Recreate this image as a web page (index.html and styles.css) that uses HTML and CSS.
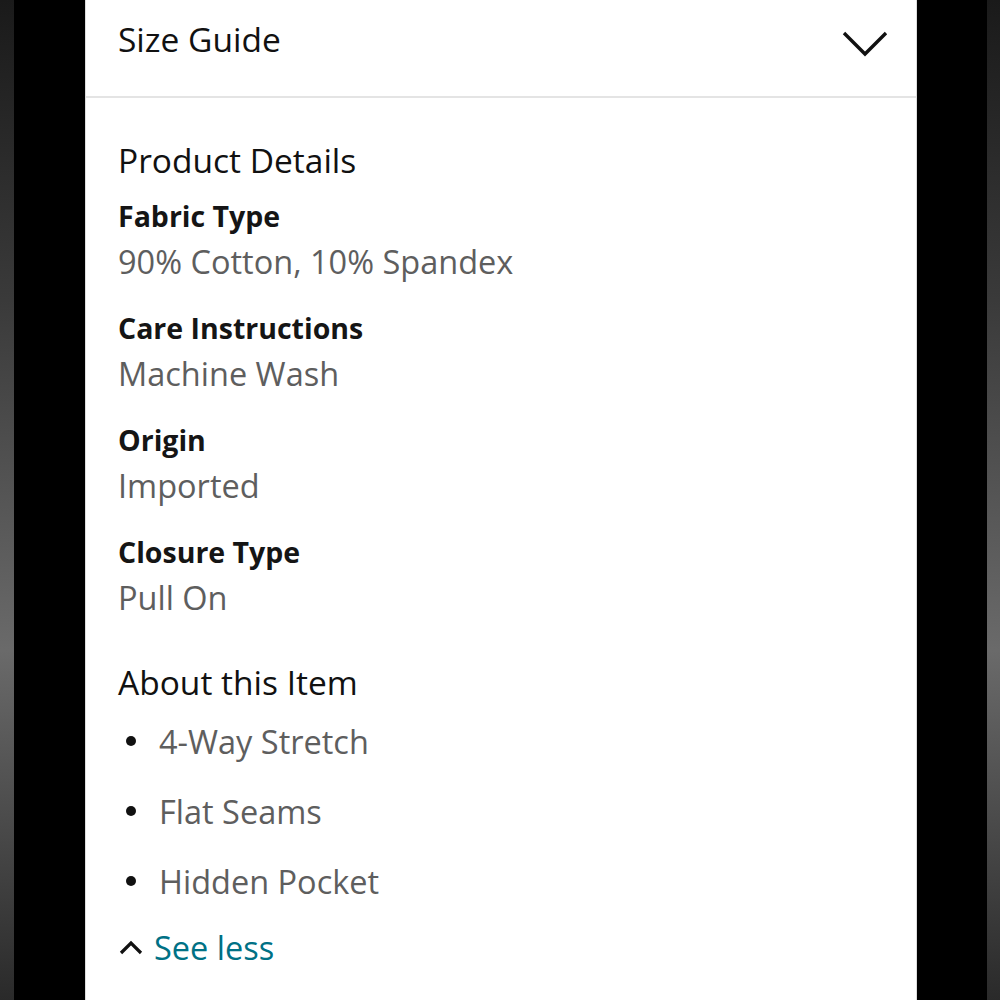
FILE: index.html
```html
<!DOCTYPE html>
<html lang="en">
<head>
  <meta charset="UTF-8" />
  <meta name="viewport" content="width=device-width, initial-scale=1.0"/>
  <title>Product Details</title>
  <link rel="stylesheet" href="styles.css">
</head>
<body>
  <div class="frame">
    <div class="edge edge-left"></div>
    <main class="panel">
      <div class="size-guide">
        <span>Size Guide</span>
        <svg class="chevron" width="48" height="28" viewBox="0 0 48 28"><path d="M3 3 L24 24 L45 3" fill="none" stroke="#111" stroke-width="3.4"/></svg>
      </div>
      <section class="details">
        <h2>Product Details</h2>
        <dl>
          <div class="row"><dt>Fabric Type</dt><dd>90% Cotton, 10% Spandex</dd></div>
          <div class="row"><dt>Care Instructions</dt><dd>Machine Wash</dd></div>
          <div class="row"><dt>Origin</dt><dd>Imported</dd></div>
          <div class="row"><dt>Closure Type</dt><dd>Pull On</dd></div>
        </dl>
        <h2 class="about">About this Item</h2>
        <ul>
          <li>4-Way Stretch</li>
          <li>Flat Seams</li>
          <li>Hidden Pocket</li>
        </ul>
        <a class="see-less" href="#">
          <svg width="26" height="16" viewBox="0 0 26 16"><path d="M3 14 L13 4 L23 14" fill="none" stroke="#111" stroke-width="3.2"/></svg>
          See less
        </a>
      </section>
    </main>
    <div class="edge edge-right"></div>
  </div>
</body>
</html>
```

FILE: styles.css
```css
body { margin: 0; background: #000; font-family: "Open Sans", "Noto Sans", sans-serif; }
.frame { display: flex; height: 1000px; overflow: hidden; }
.edge { width: 14px; background: linear-gradient(#1a1a1a, #3a3a3a 30%, #6a6a6a 65%, #2a2a2a 100%); }
.edge-left { margin-right: 71px; }
.edge-right { width: 13px; margin-left: 70px; }
.panel { width: 832px; background: #fff; border-left: 1px solid #ddd; border-right: 1px solid #ddd; box-sizing: border-box; }
.size-guide { height: 98px; box-sizing: border-box; display: flex; align-items: center; justify-content: space-between; padding: 0 27px 18px 32px; border-bottom: 2px solid #e4e4e4; font-size: 33.5px; color: #111; }
.chevron { margin-top: 10px; }
.details { padding-left: 32px; }
h2 { margin: 42px 0 0; font-size: 33.5px; font-weight: 400; line-height: 40px; color: #111; }
dl { margin: 13px 0 0; }
.row { margin-bottom: 20px; }
dt { font-size: 28.5px; font-weight: 700; line-height: 46px; color: #151515; }
dd { margin: 0; font-size: 32.5px; line-height: 46px; color: #5e5e5e; }
.digits { letter-spacing: 0.5px; }
h2.about { margin-top: 41px; }
ul { list-style: none; margin: 4px 0 0; padding: 0; }
li { display: flex; align-items: center; height: 70px; font-size: 32.5px; color: #5e5e5e; }
li::before { content: ""; width: 10px; height: 10px; border-radius: 50%; background: #111; margin: 0 23px 0 8px; }
.see-less { display: flex; align-items: center; gap: 10px; margin-top: 6px; height: 50px; font-size: 32.5px; color: #007185; text-decoration: none; }
```
